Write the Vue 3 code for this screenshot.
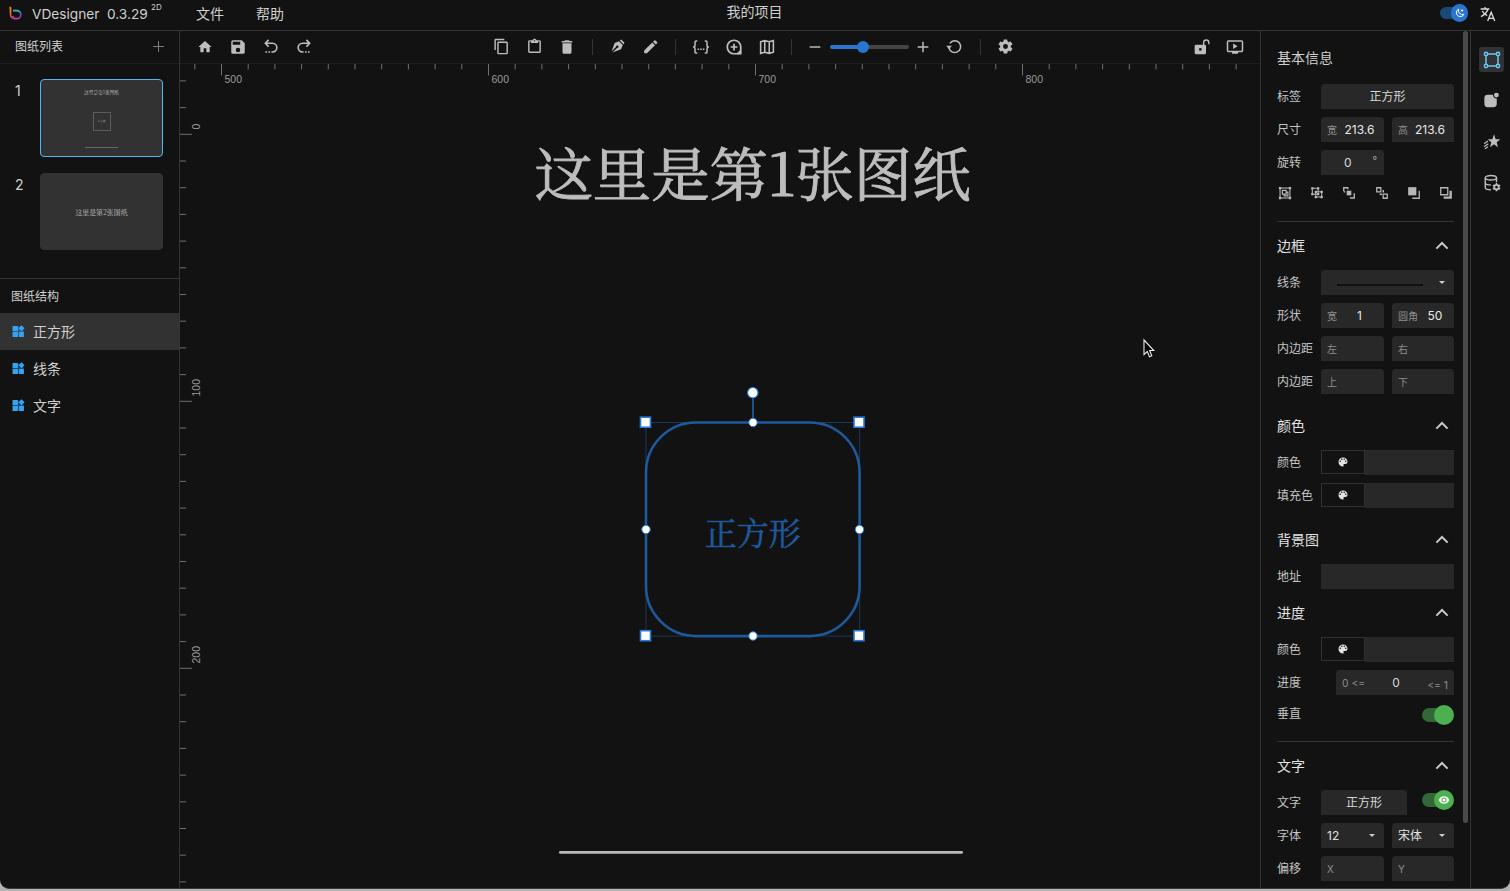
<script setup>
import { h } from 'vue'

const S = 'fill="none" stroke="currentColor"'
const icons = {
  home: '<path d="M10 20v-6h4v6h5v-8h3L12 3 2 12h3v8h5z"/>',
  save: '<path d="M17 3H5a2 2 0 0 0-2 2v14a2 2 0 0 0 2 2h14c1.1 0 2-.9 2-2V7l-4-4zm-5 16a3 3 0 1 1 0-6 3 3 0 0 1 0 6zm3-10H5V5h10v4z"/>',
  undo: `<path d="M8.800 2.500 4.500 7 8.800 11.500M5 7h9a5.800 5.800 0 0 1 0 11.600h-1.500" ${S} stroke-width="2.200"/><path d="M4.500 17.500h2.200v2.200H4.500zM8.500 17.500h2.200v2.200H8.500z"/>`,
  redo: `<path d="M15.200 2.500 19.500 7l-4.300 4.500M19 7h-9a5.800 5.800 0 0 0 0 11.600h1.500" ${S} stroke-width="2.200"/><path d="M17.300 17.500h2.200v2.200h-2.200zM13.300 17.500h2.200v2.200h-2.200z"/>`,
  copy: '<path d="M19 21H8V7h11m0-2H8a2 2 0 0 0-2 2v14a2 2 0 0 0 2 2h11a2 2 0 0 0 2-2V7a2 2 0 0 0-2-2m-3-4H4a2 2 0 0 0-2 2v14h2V3h12V1z"/>',
  paste: '<path d="M19 3h-4.180C14.400 1.840 13.300 1 12 1s-2.400.84-2.820 2H5a2 2 0 0 0-2 2v14a2 2 0 0 0 2 2h14a2 2 0 0 0 2-2V5a2 2 0 0 0-2-2m-7 0a1 1 0 1 1 0 2 1 1 0 0 1 0-2M7 7h10V5h2v14H5V5h2v2z"/>',
  trash: '<path d="M19 4h-3.500l-1-1h-5l-1 1H5v2h14M6 19a2 2 0 0 0 2 2h8a2 2 0 0 0 2-2V7H6v12z"/>',
  pen: '<path d="M14 4.500 19.500 10 17 16 5 20.500l6.300-6.300a1.800 1.800 0 1 0-1.500-1.500L3.500 19 8 7zM15.200 3.600l2-1.600L22 6.800l-1.600 2z"/>',
  pencil: '<path d="M20.710 7.040c.39-.39.39-1.040 0-1.410l-2.340-2.340c-.37-.39-1.020-.39-1.410 0l-1.840 1.830 3.750 3.750M3 17.250V21h3.750L17.810 9.930l-3.750-3.750L3 17.250z"/>',
  braces: `<path d="M7 4H5.500Q4 4 4 5.500V9.500Q4 12 1.500 12 4 12 4 14.500v4Q4 20 5.500 20H7M17 4h1.500Q20 4 20 5.500v4q0 2.500 2.500 2.500Q20 12 20 14.500v4q0 1.500-1.500 1.500H17" ${S} stroke-width="2"/><path d="M7.500 14h2v2h-2zM11 14h2v2h-2zM14.500 14h2v2h-2z"/>`,
  addmark: `<path d="M12 3a9 9 0 1 0 0 18h9v-9a9 9 0 0 0-9-9zM12 7.500v9M7.500 12h9" ${S} stroke-width="2.300"/><path d="M16.500 19.500l4-4v6h-5z"/>`,
  map: `<path d="M3.500 5 9 3.500 15 5l5.500-1.500V19L15 20.500 9 19l-5.500 1.500zM9 4v15M15 5v15" ${S} stroke-width="2.100"/>`,
  minus: `<path d="M4 12h16" ${S} stroke-width="2.200"/>`,
  plus: `<path d="M12 4v16M4 12h16" ${S} stroke-width="2.200"/>`,
  add: `<path d="M12 2v20M2 12h20" ${S} stroke-width="1.800"/>`,
  reset: `<path d="M4.200 13.500A8.300 8.300 0 1 0 5.500 7.500" ${S} stroke-width="2.100"/><path d="M.300 11h8L4.300 16z"/>`,
  cog: '<path d="M12 15.500A3.500 3.500 0 0 1 8.500 12 3.500 3.500 0 0 1 12 8.500a3.500 3.500 0 0 1 3.500 3.500 3.500 3.500 0 0 1-3.500 3.500m7.430-2.530c.04-.32.07-.64.07-.97s-.03-.66-.07-1l2.110-1.630c.19-.15.24-.42.12-.64l-2-3.460c-.12-.22-.39-.31-.61-.22l-2.490 1c-.52-.39-1.060-.73-1.690-.98l-.37-2.650A.506.506 0 0 0 14 2h-4c-.25 0-.46.18-.5.42l-.37 2.650c-.63.25-1.170.59-1.690.98l-2.490-1c-.22-.09-.49 0-.61.22l-2 3.460c-.13.22-.07.49.12.64L4.570 11c-.04.34-.07.67-.07 1s.03.65.07.97l-2.110 1.660c-.19.15-.25.42-.12.64l2 3.460c.12.22.39.3.61.22l2.490-1.010c.52.4 1.060.74 1.690.99l.37 2.650c.04.24.25.42.5.42h4c.25 0 .46-.18.5-.42l.37-2.650c.63-.26 1.170-.59 1.690-.99l2.490 1.010c.22.08.49 0 .61-.22l2-3.460c.12-.22.07-.49-.12-.64l-2.110-1.660z"/>',
  unlock: `<path d="M3 8.500h13a2 2 0 0 1 2 2V21a2 2 0 0 1-2 2H3a2 2 0 0 1-2-2V10.500a2 2 0 0 1 2-2zm6.500 5a2.100 2.100 0 1 0 0 4.200 2.100 2.100 0 0 0 0-4.200z"/><path d="M14.500 9V5.500a3.900 3.900 0 0 1 7.800 0V8" ${S} stroke-width="2.100"/>`,
  present: `<rect x="2" y="4" width="20" height="14" rx="1.200" ${S} stroke-width="2"/><path d="M9.500 7.200 15.500 11l-6 3.800zM8 18.500h8V21H8z"/>`,
  palette: '<path fill-rule="evenodd" d="M17.500 12a1.500 1.500 0 1 1 0-3 1.500 1.500 0 0 1 0 3m-3-4a1.500 1.500 0 1 1 0-3 1.500 1.500 0 0 1 0 3m-5 0a1.500 1.500 0 1 1 0-3 1.500 1.500 0 0 1 0 3m-3 4a1.500 1.500 0 1 1 0-3 1.500 1.500 0 0 1 0 3M12 3a9 9 0 0 0-9 9 9 9 0 0 0 9 9 1.500 1.500 0 0 0 1.500-1.500c0-.39-.15-.74-.39-1-.23-.27-.38-.62-.38-1a1.500 1.500 0 0 1 1.500-1.500H16a5 5 0 0 0 5-5c0-4.420-4.030-8-9-8z"/>',
  eye: '<path fill-rule="evenodd" d="M12 9a3 3 0 1 0 0 6 3 3 0 0 0 0-6m0 8a5 5 0 1 1 0-10 5 5 0 0 1 0 10m0-12.500C7 4.500 2.730 7.610 1 12c1.730 4.390 6 7.500 11 7.500s9.270-3.110 11-7.500c-1.730-4.390-6-7.500-11-7.500z"/>',
  up: `<path d="M4.500 15.500 12 8l7.500 7.500" ${S} stroke-width="2.700"/>`,
  translate: `<path d="M1 4.500h13M7.500 1.500v3M12 4.500Q9.500 12 1.500 16M3.500 7.500Q6 12.500 10.800 14.500M11.500 22.500 16.800 9.500l5.300 13M13.500 18.500h6.600" ${S} stroke-width="2"/>`,
  moon: `<path d="M9 2.500A9.500 9.500 0 1 0 21.500 15 9.500 9.500 0 0 1 9 2.500z" ${S} stroke-width="2.400"/><path d="M17 3v6M14 6h6" ${S} stroke-width="2"/>`,
  widget: '<path d="M1 2h10v9H1zM1 13h10v9H1zM13 13h9v9h-9zM17.500.500 23.200 6.200 17.500 12 11.800 6.200z"/><path d="M1 10h21v4H1zM10 3h3v18h-3z" opacity=".4"/>',
  frame: `<path d="M6 4h12M6 20h12M4 6v12M20 6v12" ${S} stroke-width="2"/><g ${S} stroke-width="2"><circle cx="4" cy="4" r="2.200"/><circle cx="20" cy="4" r="2.200"/><circle cx="4" cy="20" r="2.200"/><circle cx="20" cy="20" r="2.200"/></g>`,
  badge: '<path d="M7 4h7.500A5 5 0 0 0 20 9.500V17a5 5 0 0 1-5 5H7a5 5 0 0 1-5-5V9a5 5 0 0 1 5-5z"/><circle cx="19.500" cy="4.500" r="3.500"/>',
  star: `<path d="m15 .500 2.500 7.200 7 .300-5.500 4.500 2 7.200-6-4.200-6 4.200 2-7.200L5.500 8l7-.3z"/><path d="M6 10.500 0 14.500M6.500 14.500 0 19M6 19l-4.500 3" ${S} stroke-width="1.900"/>`,
  database: `<ellipse cx="10.500" cy="5" rx="7.500" ry="3" ${S} stroke-width="1.900"/><path d="M3 5v13c0 1.600 3 3 7.500 3M18 5v6M3 11.500c0 1.600 3 3 7.500 3" ${S} stroke-width="1.900"/><circle cx="18" cy="17.500" r="3" ${S} stroke-width="2.400"/><path d="M18 12v2.500M18 20.500V23M13.200 14.800l2 1.200M20.800 19l2 1.200M13.200 20.200l2-1.200M20.800 16l2-1.200" ${S} stroke-width="2"/>`,
  group: `<rect x="3.500" y="3.500" width="17" height="17" ${S} stroke-width="1.800"/><path d="M1.500 1.500h4v4h-4zM18.500 1.500h4v4h-4zM1.500 18.500h4v4h-4zM18.500 18.500h4v4h-4z"/><path d="M7.500 7.500h6.500v6.500H7.500zM14 10.500h3v6.500h-6.500V14" ${S} stroke-width="2"/>`,
  ungroup: `<path d="M4 4h10v10H4zM10 10h10v9H10z" ${S} stroke-width="1.800"/><path d="M2 2h4v4H2zM12 2h4v4h-4zM2 12h4v4H2zM12 12h4v4h-4zM18 8h4v4h-4zM18 17h4v4h-4zM8 17h4v4H8zM8 8h4v4H8z"/>`,
  forward: `<path d="M8 8h8v8H8z"/><path d="M3 9V3h8M13.500 20.500H21v-8M10 5.500V3M5.500 10H3" ${S} stroke-width="2.300"/>`,
  backward: `<path d="M3 3h7v7H3zM14 14h7v7h-7z" ${S} stroke-width="2.200"/><path d="M13 7h2.500v4H13zM8 13h4v2.500H8z"/>`,
  front: `<path d="M2 2h14v14H2z"/><path d="M21 8v13H9" ${S} stroke-width="2.200"/>`,
  back: `<path d="M3 3h12v12H3z" ${S} stroke-width="2.200"/><path d="M18 8h4v14H8v-4h10z"/>`
}
const Icon = (p) => h('svg', { viewBox: '0 0 24 24', width: p.size, height: p.size, fill: 'currentColor', innerHTML: icons[p.name] })
Icon.props = ['name', 'size']

const left = [['home', 16], ['save', 18], ['undo', 18], ['redo', 18]]
const tools = [
  [['copy', 17], ['paste', 17], ['trash', 18]],
  [['pen', 17], ['pencil', 17.500]],
  [['braces', 18], ['addmark', 18], ['map', 18]]
]
const arrange = ['group', 'ungroup', 'forward', 'backward', 'front', 'back']
const rail = [['frame', 18], ['badge', 16.500], ['star', 16], ['database', 18]]
const layers = ['正方形', '线条', '文字']

const step = 26.7
const hTicks = Array.from({ length: 40 }, (_, i) => ({ x: 41.500 + (i - 1) * step, major: (i - 1) % 10 === 0 }))
const vTicks = Array.from({ length: 31 }, (_, i) => ({ y: 70.300 + (i - 2) * step, major: (i - 2) % 10 === 0 }))
const handles = [[465.500, 358.200], [679, 358.200], [465.500, 571.700], [679, 571.700]]
const knobs = [[573, 358.500], [466, 465.500], [679.500, 465.500], [573, 572]]
</script>

<template>
  <div class="window">
    <header class="top">
      <svg class="logo" viewBox="0 0 14 16" width="14" height="16">
        <defs>
          <linearGradient id="lg1" x1="0" y1="0" x2="0" y2="1"><stop offset="0" stop-color="#ff9800" /><stop offset="1" stop-color="#f5315f" /></linearGradient>
          <linearGradient id="lg2" x1="0" y1="0" x2="0" y2="1"><stop offset="0" stop-color="#26c6da" /><stop offset=".5" stop-color="#4a4fd0" /><stop offset="1" stop-color="#c2409a" /></linearGradient>
        </defs>
        <path d="M4 5.700h3.800a3.900 3.900 0 0 1 0 8H5.500L3.500 11" fill="none" stroke="url(#lg2)" stroke-width="1.700" />
        <path d="M.5 1.200 2.400 2.400v8.300l2.600 3.800C2.300 14 .9 12.300.7 9.800z" fill="url(#lg1)" />
      </svg>
      <span class="brand">VDesigner</span><span class="version">0.3.29</span><sup>2D</sup>
      <span class="menu">文件</span><span class="menu second">帮助</span>
      <div class="project">我的项目</div>
      <div class="theme"><i></i><b><Icon name="moon" size="10" /></b></div>
      <Icon class="lang" name="translate" size="16" />
    </header>

    <div class="body">
      <aside class="side">
        <div class="side-head"><span>图纸列表</span><Icon name="add" size="13" /></div>
        <div class="page"><span>1</span>
          <div class="thumb active">
            <p>这里是第1张图纸</p>
            <div class="mini">正方形</div>
            <hr />
          </div>
        </div>
        <div class="page"><span>2</span>
          <div class="thumb two"><p>这里是第2张图纸</p></div>
        </div>
        <div class="tree-head">图纸结构</div>
        <div v-for="(l, i) in layers" :key="l" class="layer" :class="{ on: i === 0 }"><Icon name="widget" size="13" />{{ l }}</div>
      </aside>

      <main class="main">
        <div class="toolbar">
          <span v-for="t in left" :key="t[0]" class="slot"><Icon :name="t[0]" :size="t[1]" /></span>
          <div class="center">
            <template v-for="(g, i) in tools" :key="i">
              <span v-for="t in g" :key="t[0]" class="slot"><Icon :name="t[0]" :size="t[1]" /></span>
              <span class="sep"></span>
            </template>
            <span class="slot s30"><Icon name="minus" size="16" /></span>
            <div class="slider"><i></i><b></b></div>
            <span class="slot s28"><Icon name="plus" size="16" /></span>
            <span class="slot s35"><Icon name="reset" size="17" /></span>
            <span class="sep"></span>
            <span class="slot"><Icon name="cog" size="17" /></span>
          </div>
          <div class="end">
            <span class="slot"><Icon name="unlock" size="16" /></span>
            <span class="slot"><Icon name="present" size="18" /></span>
          </div>
        </div>
        <svg class="canvas" width="1080" height="825" viewBox="0 0 1080 825">
          <g stroke="#6f6f6f">
            <line v-for="t in hTicks" :key="t.x" :x1="t.x" :x2="t.x" y1="0" :y2="t.major ? 11.500 : 5.500" />
            <line v-for="t in vTicks" :key="t.y" :y1="t.y" :y2="t.y" x1="0" :x2="t.major ? 12 : 6" />
          </g>
          <g class="ruler">
            <text x="44.500" y="19">500</text><text x="311.500" y="19">600</text>
            <text x="578.500" y="19">700</text><text x="845.500" y="19">800</text>
            <text transform="translate(20.300 65.500) rotate(-90)">0</text>
            <text transform="translate(20.300 332.500) rotate(-90)">100</text>
            <text transform="translate(20.300 599.500) rotate(-90)">200</text>
          </g>
          <text class="title" x="572.500" y="131.500" text-anchor="middle">这里是第1张图纸</text>
          <rect x="466" y="358.500" width="213.600" height="213.600" fill="none" stroke="#17395c" />
          <rect x="466" y="358.500" width="213.600" height="213.600" rx="50" fill="none" stroke="#1d5a9c" stroke-width="2.600" />
          <text class="shape" x="572.800" y="480.500" text-anchor="middle">正方形</text>
          <line x1="573" x2="573" y1="329" y2="358" stroke="#1f66b8" stroke-width="1.500" />
          <g fill="#fff" stroke="#2a7bdc">
            <rect v-for="p in handles" :key="p[0] + '-' + p[1]" :x="p[0] - 5" :y="p[1] - 5" width="10" height="10" stroke-width="1.600" />
            <circle v-for="p in knobs" :key="p[0] + '-' + p[1]" :cx="p[0]" :cy="p[1]" r="4.200" stroke-width="1" />
            <circle cx="572.800" cy="328.700" r="5.200" stroke-width="1.200" />
          </g>
          <rect x="379" y="787" width="404" height="2.800" rx="1.400" fill="#bababa" />
          <path d="M964 276v14.500l3.300-3 2.200 5.200 2.300-1-2.200-5.200h4.200z" fill="#000" stroke="#e8e8e8" stroke-width="1.100" />
        </svg>
      </main>

      <section class="props">
        <h3 class="first">基本信息</h3>
        <div class="row"><label>标签</label><div class="in mid">正方形</div></div>
        <div class="row"><label>尺寸</label><div class="in a"><em>宽</em><span class="v">213.6</span></div><div class="in b"><em>高</em><span class="v">213.6</span></div></div>
        <div class="row"><label>旋转</label><div class="in a deg"><span>0</span><small>°</small></div></div>
        <div class="arrange"><Icon v-for="a in arrange" :key="a" :name="a" size="14" /></div>
        <div class="rule"></div>

        <h3>边框<Icon name="up" size="18" /></h3>
        <div class="row"><label>线条</label><div class="in line"><i></i><u></u></div></div>
        <div class="row"><label>形状</label><div class="in a"><em>宽</em><span class="v">1</span></div><div class="in b"><em>圆角</em><span class="v">50</span></div></div>
        <div class="row"><label>内边距</label><div class="in a"><em>左</em></div><div class="in b"><em>右</em></div></div>
        <div class="row"><label>内边距</label><div class="in a"><em>上</em></div><div class="in b"><em>下</em></div></div>

        <h3 class="gap">颜色<Icon name="up" size="18" /></h3>
        <div class="row"><label>颜色</label><div class="in color"><b><Icon name="palette" size="12" /></b></div></div>
        <div class="row"><label>填充色</label><div class="in color"><b><Icon name="palette" size="12" /></b></div></div>

        <h3 class="gap">背景图<Icon name="up" size="18" /></h3>
        <div class="row"><label>地址</label><div class="in sq"></div></div>

        <h3 class="near">进度<Icon name="up" size="18" /></h3>
        <div class="row"><label>颜色</label><div class="in color"><b><Icon name="palette" size="12" /></b></div></div>
        <div class="row"><label>进度</label><div class="in range"><em>0 &lt;=</em><span>0</span><em class="lo">&lt;= 1</em></div></div>
        <div class="row short"><label>垂直</label><div class="switch"><i></i><b></b></div></div>
        <div class="rule close"></div>

        <h3>文字<Icon name="up" size="18" /></h3>
        <div class="row"><label>文字</label><div class="in text">正方形</div><div class="switch top-align"><i></i><b><Icon name="eye" size="12" /></b></div></div>
        <div class="row"><label>字体</label><div class="in a sel">12<u></u></div><div class="in b sel">宋体<u></u></div></div>
        <div class="row"><label>偏移</label><div class="in a"><em>X</em></div><div class="in b"><em>Y</em></div></div>
        <div class="scroll"></div>
      </section>

      <nav class="rail">
        <span v-for="(r, i) in rail" :key="r[0]" :class="{ on: i === 0 }"><Icon :name="r[0]" :size="r[1]" /></span>
      </nav>
    </div>
  </div>
</template>

<style>
html, body { background: #b4b4b4; overflow: hidden; }
</style>
<style scoped>
* { box-sizing: border-box; }
svg { display: block; flex: none; }
p, h3, hr { margin: 0; }
i, em { font-style: normal; }
u { text-decoration: none; }
.window { width: 1510px; height: 889px; background: #121212; color: #d0d0d0; border-bottom: 1px solid #3a3a3a; border-radius: 0 0 9px 9px; overflow: hidden; font: 12px/16px Inter, "Noto Sans CJK SC", sans-serif; }
.top { position: relative; height: 31px; border-bottom: 1px solid #353535; display: flex; align-items: center; padding: 0 14px 3px 9px; font-size: 14px; }
.logo { margin-top: -1px; }
.brand { margin-left: 9px; width: 75px; white-space: nowrap; font-size: 13.700px; }
.version { width: 44px; font-size: 13.700px; }
sup { font-size: 8px; line-height: 10px; margin-bottom: 14px; width: 12px; vertical-align: baseline; }
.menu { margin-left: 33px; }
.menu.second { margin-left: 32px; }
.project { position: absolute; left: 0; right: 0; top: 4px; text-align: center; padding-right: 1px; }
.theme { position: relative; width: 28px; height: 18px; margin-left: auto; margin-right: 12px; margin-top: -1px; }
.theme i { position: absolute; left: 0; top: 3px; width: 24px; height: 12px; border-radius: 6px; background: #1b4878; }
.theme b { position: absolute; right: 0; top: 0; width: 17px; height: 18px; border-radius: 9px; background: #2876d2; color: #fff; display: grid; place-items: center; }
.lang { color: #ddd; }
.body { display: flex; height: 857px; }
.side { width: 180px; border-right: 1px solid #353535; }
.side-head { height: 33px; border-bottom: 1px solid #1e1e1e; display: flex; align-items: center; justify-content: space-between; padding: 0 14px 0 15px; }
.side-head svg { color: #808080; margin-top: -2px; }
.page { display: flex; margin-top: 15px; height: 78px; padding-left: 15px; font-size: 14px; }
.page + .page { margin-top: 16px; }
.page > span { width: 25px; padding-top: 4px; }
.thumb { width: 123px; height: 78px; border-radius: 4px; background: #323232; border: 1px solid #323232; display: flex; flex-direction: column; align-items: center; font-family: "Noto Serif CJK SC", "Liberation Serif", "Noto Sans CJK SC", serif; color: #c4c4c4; }
.thumb.active { border-color: #4db8f0; }
.thumb p { font-size: 4.700px; line-height: 8px; margin-top: 8px; white-space: nowrap; }
.mini { width: 18px; height: 19px; border: 1px solid #5c5c5c; margin-top: 16px; font-size: 2.700px; line-height: 17px; text-align: center; }
.thumb hr { width: 33px; border: 0; height: 1px; background: #666; margin-top: 16px; }
.thumb.two { height: 77px; justify-content: center; }
.thumb.two p { font-size: 6.900px; margin: 1px 0 0; }
.tree-head { border-top: 1px solid #353535; margin-top: 27px; height: 35px; line-height: 35px; padding-left: 11px; }
.layer { height: 37px; display: flex; align-items: center; font-size: 14px; padding-left: 12px; gap: 8px; }
.layer.on { background: #323232; }
.layer svg { color: #35a2f2; }
.main { width: 1080px; }
.toolbar { height: 33px; border-bottom: 1px solid #1e1e1e; display: flex; align-items: center; padding: 0 8.500px 1px 8px; color: #bdbdbd; }
.slot { width: 33px; display: flex; justify-content: center; flex: none; }
.s30 { width: 29px; } .s28 { width: 28px; } .s35 { width: 35px; }
.center, .end { display: flex; align-items: center; }
.center { margin-left: 164.500px; }
.end { margin-left: auto; }
.sep { width: 17.400px; height: 16px; display: flex; justify-content: center; }
.sep::after { content: ""; width: 1px; background: #333; }
.slider { position: relative; width: 79px; height: 12px; padding-top: 4px; }
.slider i { display: block; height: 4px; border-radius: 2px; background: linear-gradient(90deg, #2876d2 33px, #444 33px); }
.slider b { position: absolute; left: 27px; top: 0; width: 12px; height: 12px; border-radius: 6px; background: #2876d2; }
.ruler { font: 10.500px "Liberation Sans", sans-serif; fill: #9a9a9a; }
.title { font: 58.400px "Noto Serif CJK SC", "Liberation Serif", "Noto Sans CJK SC", serif; fill: #bdbdbd; stroke: #bdbdbd; stroke-width: .9px; }
.shape { font: 32px "Noto Serif CJK SC", "Liberation Serif", "Noto Sans CJK SC", serif; fill: #1d5a9c; stroke: #1d5a9c; stroke-width: .5px; }
.props { position: relative; width: 210px; border-left: 1px solid #353535; padding: 0 16px; }
h3 { font-size: 14px; font-weight: 400; line-height: 24px; height: 24px; margin: 12px 0; display: flex; justify-content: space-between; align-items: center; padding-right: 3px; color: #e2e2e2; }
h3 svg { color: #c8c8c8; }
h3.first { margin: 15px 0 14px; color: #d0d0d0; }
h3.gap { margin-top: 20px; }
.row { display: flex; height: 25px; margin-bottom: 8px; align-items: center; color: #d8d8d8; width: 177px; }
.row:has(+ h3) { margin-bottom: 0; }
.row label { width: 44px; flex: none; color: #c4c4c4; white-space: nowrap; }
.in { flex: 1; height: 25px; background: #282828; border-radius: 4px 4px 0 0; display: flex; align-items: center; padding: 0 6px; }
.in em { font-size: 10px; color: #8d8d8d; padding-top: 1px; white-space: nowrap; }
.v { flex: 1; text-align: center; color: #e8e8e8; padding-left: 4px; }
.mid, .text { justify-content: center; }
.a { flex: none; width: 63px; }
.b { flex: none; width: 62px; margin-left: 8px; }
.deg { padding: 0 7px 0 23px; justify-content: space-between; }
.deg small { font-size: 10px; color: #aaa; margin-top: -6px; }
.arrange { display: flex; justify-content: space-between; height: 16px; align-items: center; margin: 10px 0 20px; padding: 0 0 0 1px; width: 176px; color: #b8b8b8; }
.row:has(+ .arrange) { margin-bottom: 0; }
.rule { height: 1px; background: #333; }
.in.line { padding: 3px 9px 0 16px; justify-content: space-between; }
.line i { width: 86px; height: 2px; background: #101010; margin-top: 2px; }
.in u { border: 3px solid transparent; border-top-color: #ccc; border-bottom: 0; }
.in.line u { margin-top: -3px; }
.color, .sq { border-radius: 0; padding: 0; }
.color { background: linear-gradient(90deg, #121212 44px, #282828 44px); }
.color b { width: 44px; height: 24px; margin-bottom: 1px; border: 1px solid #303030; display: grid; place-items: center; color: #e4e4e4; }
h3.near { margin-top: 12px; }
.range { margin-left: 15px; justify-content: space-between; }
.in.range em { font-size: 10.300px; }
.in.range .lo { padding-top: 4px; }
.row.short { height: 22px; margin-bottom: 0; }
.switch { position: relative; width: 32px; height: 20px; margin: 1px 0 0 auto; }
.switch i { position: absolute; left: 0; top: 3px; width: 26px; height: 14px; border-radius: 7px; background: #316835; }
.switch b { position: absolute; right: 0; top: 0; width: 20px; height: 20px; border-radius: 10px; background: #4caf50; color: #fff; display: grid; place-items: center; }
.switch.top-align { align-self: flex-start; margin-top: 0; }
.rule.close { margin-top: 16px; }
.in.text { flex: none; width: 86px; }
.in.sel { justify-content: space-between; padding-right: 9px; color: #e0e0e0; }
.scroll { position: absolute; right: 2px; top: 0; width: 5px; height: 792px; border-radius: 3px; background: #4a4a4a; }
.rail { width: 40px; border-left: 1px solid #353535; padding: 16px 0 0 8px; color: #bdbdbd; display: flex; flex-direction: column; gap: 16.200px; }
.rail span { width: 25px; height: 25px; display: grid; place-items: center; }
.rail .on { background: #303234; border-radius: 3px; color: #6cc4f2; }
</style>
